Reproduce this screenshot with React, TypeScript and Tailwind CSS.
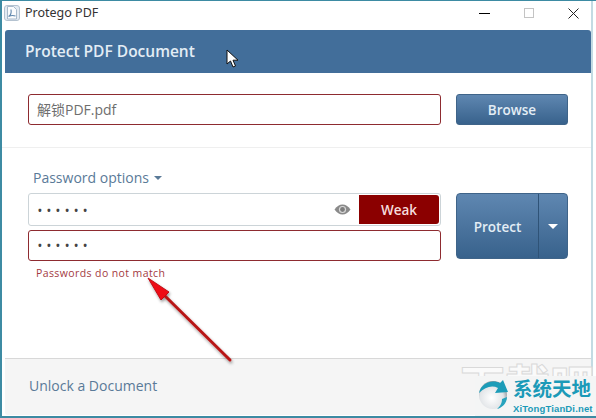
const sans = "font-['Open_Sans','Noto_Sans_CJK_SC',sans-serif]";

function AppIcon() {
  return (
    <svg width="16" height="16" viewBox="0 0 16 16">
      <rect x="0.5" y="0.5" width="15" height="15" rx="2.500" fill="#e4ebf2" stroke="#b4c2d0" />
      <path d="M3.500 1.500h6l3 3v9.500h-9z" fill="#fbfcfd" stroke="#a8bacb" />
      <path d="M4.500 11.500c2-1 3-4 2.500-7M4.500 11.500c3-1.500 4.500-1.500 7-.5" fill="none" stroke="#5f87ad" strokeWidth="1.100" />
    </svg>
  );
}

function EyeIcon() {
  return (
    <svg width="17" height="11" viewBox="0 0 17 11" className="ml-auto mr-[8px]">
      <path d="M.5 5.500C3 2 5.500.5 8.500.5s5.500 1.500 8 5c-2.500 3.500-5 5-8 5s-5.500-1.500-8-5z" fill="#8a8a8a" />
      <circle cx="8.500" cy="5.500" r="3.600" fill="#d8d8d8" />
      <circle cx="8.500" cy="5.500" r="2.400" fill="#7d7d7d" />
    </svg>
  );
}

function Cursor() {
  return (
    <svg className="absolute left-[224px] top-[48px]" width="13" height="20" viewBox="0 0 13 20">
      <path d="M1 1v14l3.500-3 2.500 6 2.500-1-2.500-5.800H12z" fill="#fff" stroke="#111" strokeWidth="1" />
    </svg>
  );
}

function RedArrow() {
  return (
    <svg className="absolute left-[138px] top-[269px]" width="100" height="98" viewBox="0 0 100 98">
      <defs>
        <filter id="arrowShadow" x="-20%" y="-20%" width="150%" height="150%">
          <feDropShadow dx="1" dy="2" stdDeviation="1.500" floodColor="#000" floodOpacity="0.4" />
        </filter>
      </defs>
      <g filter="url(#arrowShadow)">
        <path d="M90 90 L24 25" stroke="#b81818" strokeWidth="3" strokeLinecap="round" />
        <path d="M8 8 L29 22 L21 30 Z" fill="#ee0f16" stroke="#c01015" strokeWidth="1" />
      </g>
    </svg>
  );
}

function Watermark() {
  return (
    <>
      {/* only the top of the big faint mark shows above the badge */}
      <div className="absolute left-[458px] top-[358px] h-[17px] w-[136px] overflow-hidden">
        <span className="block font-['Noto_Sans_CJK_SC',sans-serif] text-[45px] leading-[50px] font-bold whitespace-nowrap text-white/60 [-webkit-text-stroke:1px_#d9d9d9]">
          下载吧
        </span>
      </div>
      <div className="absolute left-[473px] top-[375px] flex h-[42px] w-[121px] items-start bg-[#f4f5f5]">
        <svg width="32" height="32" viewBox="0 0 32 32" className="ml-[3px] mt-[2px] shrink-0">
          <defs>
            <radialGradient id="ball" cx="45%" cy="60%" r="60%">
              <stop offset="0%" stopColor="#ffffff" />
              <stop offset="70%" stopColor="#e2e5e8" />
              <stop offset="100%" stopColor="#8d9399" />
            </radialGradient>
          </defs>
          <circle cx="15" cy="17" r="14" fill="url(#ball)" />
          <path d="M1 15C3 5 14 1 22 5l3-3 5 12-13 1 3-5C14 7 7 9 1 15z" fill="#1c9cb8" />
          <path d="M29 19c0 6-5 11-10 12 4-3 5-7 5-10z" fill="#27a3bd" />
        </svg>
        <div className="ml-[3px] flex flex-col items-start">
          <span className="mt-[1px] h-[22px] font-['Noto_Sans_CJK_SC',sans-serif] text-[19.500px] leading-[22px] font-bold whitespace-nowrap text-[#1b9ab8]">系统天地</span>
          <span className="mt-[5px] font-['Liberation_Sans',sans-serif] text-[9.500px] leading-[10px] font-bold tracking-[0.150px] whitespace-nowrap text-[#1b9ab8]">XiTongTianDi.net</span>
        </div>
      </div>
    </>
  );
}

export default function App() {
  return (
    <div className={`relative h-[418px] w-[596px] overflow-hidden border-t border-b-2 border-l-2 border-[#3d8ba3] bg-white ${sans}`}>
      <div className="h-full w-[591px] border-r-2 border-[#c3dbe3]">
        {/* title bar */}
        <div className="flex h-[29px] items-center pr-[12px] pb-[5px] pl-[2px]">
          <AppIcon />
          <span className="ml-[5px] font-['Noto_Sans',sans-serif] text-[12.500px] text-[#333]">Protego PDF</span>
          <div className="ml-auto flex items-center gap-[34px]">
            <span className="h-px w-[11px] bg-black" />
            <span className="h-[10px] w-[10px] border border-[#c4c4c4]" />
            <svg width="11" height="11" viewBox="0 0 11 11">
              <path d="M.5.5l10 10M10.500.5l-10 10" stroke="#222" strokeWidth="1" />
            </svg>
          </div>
        </div>

        {/* header */}
        <div className="ml-[3px] flex h-[43px] items-center rounded-t-[3px] bg-[#426e9a] pl-[20px] text-[15.500px] font-semibold text-[#e3edf5]">
          Protect PDF Document
        </div>

        <div className="flex h-[75px] gap-[15px] border-b border-[#efefef] pt-[21px] pl-[26px]">
          <div className="flex h-[31px] w-[413px] items-center rounded-[3px] border border-[#8e2b30] pl-[8px] text-[14px] text-[#6e6e6e]">
            解锁PDF.pdf
          </div>
          <button className="h-[31px] w-[112px] rounded-[3px] border border-[#3f6489] bg-gradient-to-b from-[#5f87b1] to-[#38628c] pt-[2px] text-[13.500px] font-semibold text-[#e3edf5]">
            Browse
          </button>
        </div>

        {/* password section */}
        <div className="flex h-[210px] gap-[15px] pt-[45px] pl-[26px]">
          <div className="relative w-[413px]">
            <button className="absolute -top-[26px] left-[5px] flex items-center gap-[5px] text-[14px] text-[#5a7a98]">
              Password options
              <span className="h-0 w-0 border-x-[4px] border-t-[4px] border-x-transparent border-t-[#5a7a98]" />
            </button>
            <div className="flex h-[33px] items-center rounded-[3px] border border-[#ccd4d8] pr-px pl-[9px]">
              <span className="pt-px text-[10px] font-bold tracking-[5.300px] text-[#444]">••••••</span>
              <EyeIcon />
              <div className="flex h-[29px] w-[80px] items-center justify-center rounded-r-[3px] bg-[#8b0000] pt-[2px] text-[13.500px] font-semibold text-[#f6dcdc]">
                Weak
              </div>
            </div>
            <div className="mt-[4px] flex h-[31px] items-center rounded-[3px] border border-[#8e2b30] pl-[9px]">
              <span className="text-[10px] font-bold tracking-[5.300px] text-[#444]">••••••</span>
            </div>
            <p className="mt-[4px] pl-[8px] text-[10.500px] leading-[16px] tracking-[0.400px] text-[#a33a3f]">Passwords do not match</p>
          </div>
          <div className="flex h-[66px] w-[112px] overflow-hidden rounded-[4px] border border-[#3f6489] bg-gradient-to-b from-[#5f87b1] to-[#38628c] text-[#e3edf5]">
            <button className="flex-1 pt-[2px] text-[13.500px] font-semibold">Protect</button>
            <button className="flex w-[29px] items-center justify-center border-l border-[#2f5377]">
              <span className="h-0 w-0 border-x-[5px] border-t-[5px] border-x-transparent border-t-white" />
            </button>
          </div>
        </div>

        {/* footer */}
        <div className="ml-[3px] flex h-[57px] items-center rounded-b-[3px] border-t border-[#d8d8d8] bg-[#f5f5f5] pb-[4px] pl-[24px] text-[14px] text-[#5a7a98]">
          Unlock a Document
        </div>
      </div>

      <Cursor />
      <RedArrow />
      <Watermark />
    </div>
  );
}
